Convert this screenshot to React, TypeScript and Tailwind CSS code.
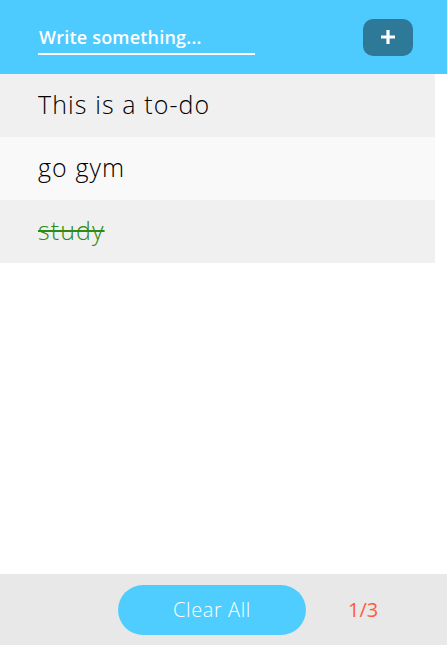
import { useState } from "react";

type Todo = {
  id: number;
  text: string;
  done: boolean;
};

const initialTodos: Todo[] = [
  { id: 1, text: "This is a to-do", done: false },
  { id: 2, text: "go gym", done: false },
  { id: 3, text: "study", done: true },
];

const App = () => {
  const [todos] = useState<Todo[]>(initialTodos);
  const doneCount = todos.filter((t) => t.done).length;

  return (
    <div
      className="flex flex-col h-[645px] w-full bg-white"
      style={{ fontFamily: '"Open Sans", "Noto Sans", sans-serif' }}
    >
      <div className="flex items-center justify-between h-[74px] bg-[#4dcbfe] pl-[38px] pr-[34px]">
        <input
          placeholder="Write something..."
          className="w-[217px] h-[34px] mt-[2px] bg-transparent border-b-2 border-white text-white text-[18px] font-semibold tracking-[0.2px] placeholder:text-white outline-none pl-[1px]"
        />
        <button className="flex items-center justify-center w-[50px] h-[37px] rounded-[10px] bg-[#2e7898] text-white">
          <svg width="16" height="16" viewBox="0 0 16 16">
            <path d="M8 1v14M1 8h14" stroke="white" strokeWidth="3.2" />
          </svg>
        </button>
      </div>

      <ul className="w-[435px]">
        {todos.map((todo, i) => (
          <li
            key={todo.id}
            className={`flex items-center h-[63px] pl-[38px] pb-[2px] text-[25px] font-light tracking-[1.1px] ${
              i % 2 === 0 ? "bg-[#f0f0f0]" : "bg-[#f9f9f9]"
            } ${todo.done ? "line-through text-[#2e8b13] decoration-[#2e8b13]" : "text-black"}`}
          >
            {todo.text}
          </li>
        ))}
      </ul>

      <div className="flex-1" />

      <div className="flex items-center h-[71px] bg-[#e8e8e8] pl-[118px]">
        <button className="w-[188px] h-[50px] rounded-full bg-[#4fcdfe] text-white text-[20px] font-light tracking-[0.6px]">
          Clear All
        </button>
        <span className="ml-[42px] text-[20px] text-[#ff5a3c]">
          {doneCount}/{todos.length}
        </span>
      </div>
    </div>
  );
};

export default App;
